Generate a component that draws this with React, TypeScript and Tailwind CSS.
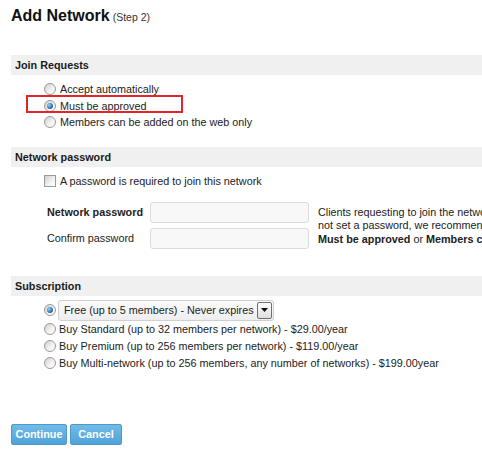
import React from "react";

function Radio({ checked }: { checked?: boolean }) {
  return (
    <span className="relative inline-block w-[12px] h-[12px] shrink-0 rounded-full border border-[#9a9a9a] bg-[linear-gradient(135deg,#cfcfcf,#f4f4f4_60%,#ffffff)]">
      {checked && (
        <span className="absolute left-[2px] top-[2px] w-[6px] h-[6px] rounded-full bg-[radial-gradient(circle_at_35%_35%,#9ad8ff,#2a78b8_55%,#124a80)]" />
      )}
    </span>
  );
}

function Checkbox() {
  return (
    <span className="inline-block w-[12px] h-[12px] shrink-0 border border-[#9a9a9a] bg-[linear-gradient(135deg,#d0d0d0,#f2f2f2_60%,#ffffff)]" />
  );
}

function Header({ children }: { children: React.ReactNode }) {
  return (
    <div className="ml-[11px] h-[20px] bg-[#f0f0f0] pl-[4px] font-bold leading-[20px] text-[#1a1a1a]">
      {children}
    </div>
  );
}

export default function App() {
  return (
    <div className="w-[482px] h-[451px] overflow-hidden bg-white text-[10.8px] text-[#222] font-['Liberation_Sans',Arial,sans-serif]">
      {/* Title */}
      <div className="pl-[11px] pt-[5px] h-[26px] leading-[22px] whitespace-nowrap">
        <span className="text-[16px] font-bold text-[#111]">Add Network</span>{" "}
        <span className="text-[10.5px] text-[#333]">(Step 2)</span>
      </div>

      {/* Join Requests */}
      <div className="mt-[29px]">
        <Header>Join Requests</Header>
        <div className="relative mt-[6px]">
          <div className="flex h-[16.5px] items-center gap-[4px] pl-[44px]">
            <Radio />
            <span>Accept automatically</span>
          </div>
          <div className="flex h-[16.5px] items-center gap-[4px] pl-[44px]">
            <Radio checked />
            <span>Must be approved</span>
          </div>
          <div className="flex h-[16.5px] items-center gap-[4px] pl-[44px] whitespace-nowrap">
            <Radio />
            <span>Members can be added on the web only</span>
          </div>
          <div className="absolute left-[26px] top-[14px] w-[157px] h-[18px] border-2 border-[#e4242a]" />
        </div>
      </div>

      {/* Network password */}
      <div className="mt-[16.5px]">
        <Header>Network password</Header>
        <div className="mt-[6px] flex h-[16px] items-center gap-[4px] pl-[44px] whitespace-nowrap">
          <Checkbox />
          <span>A password is required to join this network</span>
        </div>
        <div className="mt-[12.5px] flex">
          <div className="flex flex-col gap-[5.5px]">
            <div className="flex items-center">
              <span className="w-[103px] pl-[47px] box-content font-bold whitespace-nowrap">Network password</span>
              <div className="w-[159px] h-[21px] rounded-[3px] border border-[#dcdcdc] bg-[#f8f8f8]" />
            </div>
            <div className="flex items-center">
              <span className="w-[103px] pl-[47px] box-content whitespace-nowrap">Confirm password</span>
              <div className="w-[159px] h-[21px] rounded-[3px] border border-[#dcdcdc] bg-[#f8f8f8]" />
            </div>
          </div>
          <div className="ml-[9px] mt-[4.5px] leading-[13.3px] whitespace-nowrap">
            Clients requesting to join the network will need to enter this password. If you do
            <br />
            not set a password, we recommend setting Join Requests to
            <br />
            <b>Must be approved</b> or <b>Members can be added on the web only</b>.
          </div>
        </div>
      </div>

      {/* Subscription */}
      <div className="mt-[26.5px]">
        <Header>Subscription</Header>
        <div className="mt-[4px] flex h-[21px] items-center gap-[2px] pl-[44px]">
          <Radio checked />
          <div className="flex w-[216px] h-[21px] items-center justify-between rounded-[3px] border border-[#cfcfcf] bg-[linear-gradient(#fbfbfb,#eeeeee)] pl-[5px] pr-[1px] whitespace-nowrap">
            <span>Free (up to 5 members) - Never expires</span>
            <span className="flex w-[15px] h-[17px] items-center justify-center rounded-[2px] border border-[#6f6f6f] bg-[linear-gradient(#ffffff,#dedede)]">
              <svg width="7" height="4" viewBox="0 0 7 4">
                <polygon points="0,0 7,0 3.5,4" fill="#111" />
              </svg>
            </span>
          </div>
        </div>
        <div className="flex h-[17px] items-center gap-[3px] pl-[44px] whitespace-nowrap">
          <Radio />
          <span>Buy Standard (up to 32 members per network) - $29.00/year</span>
        </div>
        <div className="flex h-[17px] items-center gap-[3px] pl-[44px] whitespace-nowrap">
          <Radio />
          <span>Buy Premium (up to 256 members per network) - $119.00/year</span>
        </div>
        <div className="flex h-[17px] items-center gap-[3px] pl-[44px] whitespace-nowrap">
          <Radio />
          <span>Buy Multi-network (up to 256 members, any number of networks) - $199.00year</span>
        </div>
      </div>

      {/* Buttons */}
      <div className="mt-[52.5px] flex gap-[3px] pl-[11px]">
        <button className="w-[56px] h-[21px] rounded-[2px] border border-[#4f98cc] bg-[linear-gradient(#72bbe8,#4fa2d8)] text-white font-bold leading-[19px] text-center">
          Continue
        </button>
        <button className="w-[52px] h-[21px] rounded-[2px] border border-[#4f98cc] bg-[linear-gradient(#72bbe8,#4fa2d8)] text-white font-bold leading-[19px] text-center">
          Cancel
        </button>
      </div>
    </div>
  );
}
